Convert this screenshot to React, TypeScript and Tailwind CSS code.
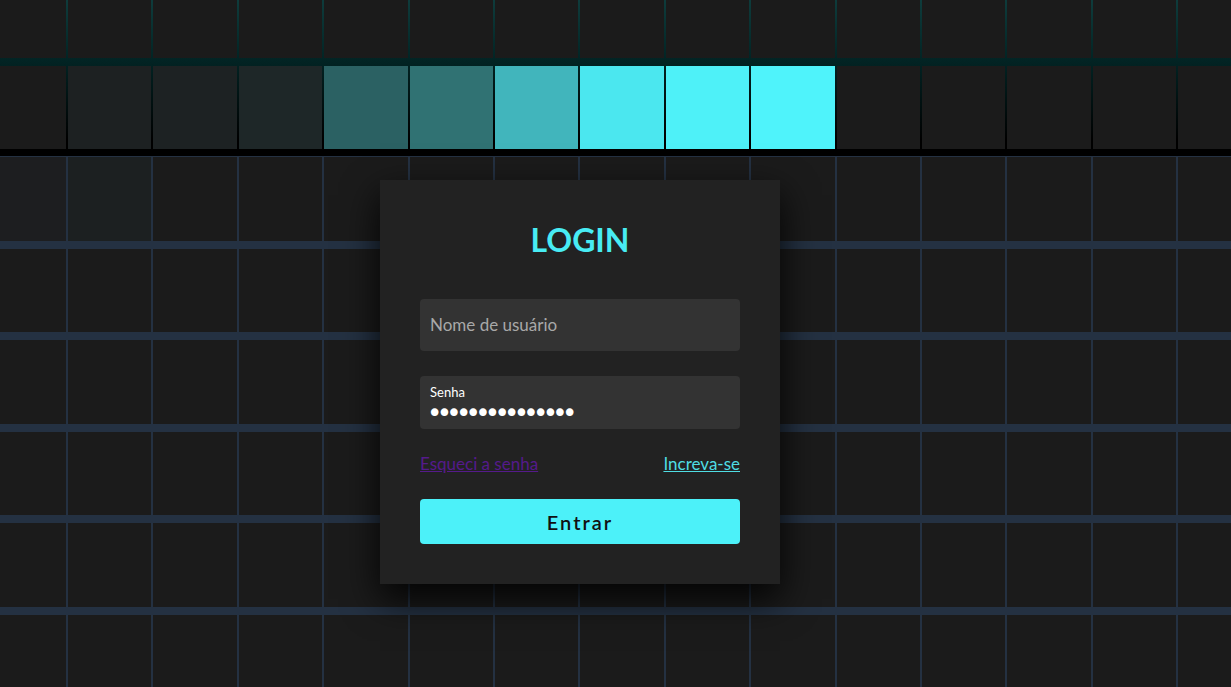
import { useState } from "react";

// tinted squares left behind by the hover trail (row-col -> bg class)
const trail: Record<string, string> = {
    "1-1": "bg-[#1d2122]",
    "1-2": "bg-[#1d2223]",
    "1-3": "bg-[#1e2728]",
    "1-4": "bg-[#2b6163]",
    "1-5": "bg-[#307273]",
    "1-6": "bg-[#41b5bc]",
    "1-7": "bg-[#4be7ef]",
    "1-8": "bg-[#4ef1f8]",
    "1-9": "bg-[#4ff3fb]",
    "2-0": "bg-[#1d1e20]",
    "2-1": "bg-[#1c2021]",
};

const cells = Array.from({ length: 8 * 15 }, (_, i) => `${Math.floor(i / 15)}-${i % 15}`);

export default function App() {
    const [user, setUser] = useState("");
    const [pass, setPass] = useState("minhasenha12345");

    return (
        <section className="relative h-screen w-full overflow-hidden bg-[#243142] font-['Lato',sans-serif]">
            <div className="absolute inset-x-0 top-0 h-[156px] bg-[linear-gradient(to_bottom,#0e3c3c_0px,#022424_60px,#000_140px,#000_156px)]" />

            <div className="relative z-10 -ml-[17.4px] -mt-[26px] grid grid-cols-[repeat(15,83.4px)] auto-rows-[83.5px] gap-x-[2px] gap-y-[8px]">
                {cells.map((key) => (
                    <span key={key} className={`block ${trail[key] ?? "bg-[#1b1b1b]"}`} />
                ))}
            </div>

            <div className="absolute left-[380px] top-[180px] z-20 flex w-[400px] flex-col items-center gap-10 bg-[#222222] p-10 shadow-[0_15px_35px_rgba(0,0,0,0.9)]">
                <h2 className="text-[32px] font-bold leading-[39px] text-[#48ecf4]">LOGIN</h2>

                <form className="flex w-full flex-col gap-[25px]" onSubmit={(e) => e.preventDefault()}>
                    <div className="relative w-full">
                        <input
                            type="text"
                            value={user}
                            onChange={(e) => setUser(e.target.value)}
                            className="h-[52px] w-full rounded bg-[#333333] px-[10px] pt-[25px] pb-[7.5px] text-[17px] text-white outline-none"
                        />
                        <i className="pointer-events-none absolute left-0 top-0 px-[10px] py-[15px] text-[17px] not-italic leading-[22px] text-[#a8a8a8]">
                            Nome de usuário
                        </i>
                    </div>

                    <div className="relative w-full">
                        <input
                            type="password"
                            value={pass}
                            onChange={(e) => setPass(e.target.value)}
                            className="h-[53px] w-full rounded bg-[#333333] pl-[7px] pr-[10px] pt-[27px] pb-[6px] font-['DejaVu_Sans',sans-serif] text-[26px] tracking-[-5.7px] text-white outline-none"
                        />
                        <i className="pointer-events-none absolute left-0 top-0 -translate-y-[7.5px] px-[10px] py-[15px] text-[13px] not-italic leading-4 text-white">
                            Senha
                        </i>
                    </div>

                    <div className="flex items-center justify-between text-[17px] leading-5">
                        <a href="#" className="text-[#551a8b] underline">Esqueci a senha</a>
                        <a href="#" className="text-[#4fdde4] underline">Increva-se</a>
                    </div>

                    <button
                        type="submit"
                        className="h-[45px] w-full rounded bg-[#4cf1f9] text-[20px] font-semibold tracking-[2px] text-[#111111]"
                    >
                        Entrar
                    </button>
                </form>
            </div>
        </section>
    );
}
